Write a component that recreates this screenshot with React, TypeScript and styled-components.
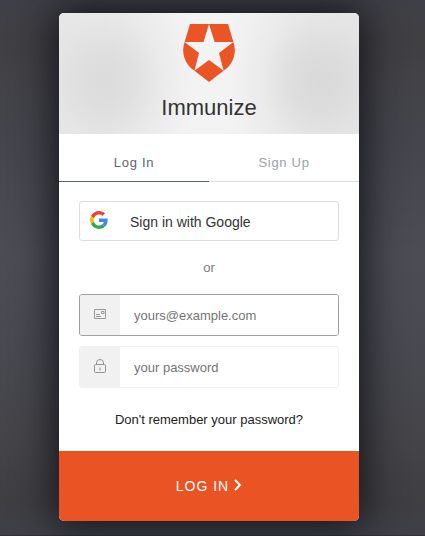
import React from "react";
import styled, { createGlobalStyle } from "styled-components";

const GlobalStyle = createGlobalStyle`
  *, *::before, *::after { box-sizing: border-box; }
  body {
    margin: 0;
    font-family: "Liberation Sans", Arial, sans-serif;
    overflow: hidden;
  }
  button, input { font-family: inherit; }
`;

const Page = styled.main`
  height: 100vh;
  padding-top: 13px;
  padding-left: 59px;
  border-bottom: 1px solid #372f38;
  background: linear-gradient(180deg, #3f3f49 0%, #404043 7%, #44444c 24%, #4c4c55 48%, #4a4a53 60%, #444449 82%, #3f3f42 94%, #3f3f49 100%);
`;

const Card = styled.form`
  display: flex;
  flex-direction: column;
  width: 300px;
  height: 508px;
  border-radius: 5px;
  overflow: hidden;
  background: #fff;
  box-shadow: 0 0 40px 4px #111118;
`;

const Header = styled.header`
  display: flex;
  flex-direction: column;
  align-items: center;
  height: 121px;
  padding-top: 11px;
  background:
    radial-gradient(ellipse 84px 100px at 50px 68px, rgba(208, 208, 208, 0.6) 0%, rgba(210, 210, 210, 0.5) 30%, rgba(218, 218, 218, 0.24) 65%, rgba(235, 235, 235, 0) 100%),
    radial-gradient(ellipse 84px 100px at 258px 68px, rgba(208, 208, 208, 0.65) 0%, rgba(210, 210, 210, 0.55) 30%, rgba(218, 218, 218, 0.24) 65%, rgba(235, 235, 235, 0) 100%),
    linear-gradient(90deg, #e8e8e8, #f3f3f3 45%, #f3f3f3 55%, #e6e6e6);
`;

const Title = styled.h1`
  margin: 13px 0 0;
  font-size: 22px;
  line-height: 25px;
  font-weight: 400;
  color: #333;
`;

const Tabs = styled.nav`
  display: flex;
  height: 48px;
`;

const Tab = styled.button<{ $active?: boolean }>`
  flex: 1;
  padding: 9px 0 0;
  border: 0;
  border-bottom: 1px solid ${(p) => (p.$active ? "#5c666f" : "#d9dcdd")};
  background: none;
  font-size: 13px;
  letter-spacing: 0.7px;
  color: ${(p) => (p.$active ? "#5c666f" : "#9ca3a8")};
`;

const Content = styled.section`
  display: flex;
  flex-direction: column;
  flex: 1;
  padding: 19px 20px 0;
`;

const GoogleButton = styled.button`
  display: flex;
  align-items: center;
  height: 40px;
  padding: 0 0 2px 10px;
  border: 1px solid #dedede;
  border-radius: 3px;
  background: #fff;
  font-size: 14px;
  color: #333;
  gap: 22px;

  span { padding-top: 3px; }
`;

const Separator = styled.p`
  margin: 19px 0 18px;
  font-size: 13px;
  line-height: 16px;
  text-align: center;
  color: #7c7c7c;
`;

const Field = styled.label<{ $focused?: boolean }>`
  display: flex;
  height: 42px;
  margin-bottom: 10px;
  border: 1px solid ${(p) => (p.$focused ? "#a0a0a0" : "#f1f1f1")};
  border-radius: 3px;
  overflow: hidden;
`;

const FieldIcon = styled.span`
  display: flex;
  align-items: center;
  justify-content: center;
  width: 40px;
  background: #f1f1f1;

  svg { margin-top: -2px; }
`;

const Input = styled.input`
  flex: 1;
  min-width: 0;
  padding: 1px 14px 0;
  border: 0;
  outline: 0;
  font-size: 13px;
  color: #555;

  &::placeholder { color: #757575; opacity: 1; }
`;

const ForgotLink = styled.a`
  margin-top: 13px;
  font-size: 13px;
  line-height: 17px;
  text-align: center;
  color: #222;
`;

const Submit = styled.button`
  display: flex;
  align-items: center;
  justify-content: center;
  gap: 5px;
  height: 70px;
  padding: 0;
  border: 0;
  background: #ea5323;
  color: #fff;
  font-size: 14px;
  letter-spacing: 1px;

  svg { margin-top: -2px; }
`;

const ShieldLogo = () => (
  <svg width="52" height="58" viewBox="0 0 52 58" fill="#eb5424" aria-hidden="true">
    <path d="M7 0H26L20.5 18H1.6Z" />
    <path d="M26 0H45L50.4 18H31.6Z" />
    <path d="M1.6 18L16 29L11.4 46.8C3 41 -2.5 31 1.6 18Z" />
    <path d="M50.4 18L36 29L40.6 46.8C49 41 54.5 31 50.4 18Z" />
    <path d="M26 36L40.6 46.8L26 58L11.4 46.8Z" />
  </svg>
);

const GoogleIcon = () => (
  <svg width="18" height="18" viewBox="0 0 48 48" aria-hidden="true">
    <path fill="#EA4335" d="M24 9.5c3.5 0 6.7 1.2 9.2 3.6l6.9-6.9C35.9 2.4 30.5 0 24 0 14.6 0 6.5 5.4 2.6 13.2l8 6.2C12.4 13.7 17.7 9.5 24 9.5z" />
    <path fill="#4285F4" d="M47 24.6c0-1.6-.2-3.1-.4-4.6H24v9h12.9c-.6 3-2.3 5.5-4.8 7.2l7.7 6C44.4 38 47 32 47 24.6z" />
    <path fill="#FBBC05" d="M10.5 28.6A14.5 14.5 0 0 1 9.8 24c0-1.6.3-3.1.8-4.6l-8-6.2A24 24 0 0 0 0 24c0 3.9.9 7.5 2.6 10.8z" />
    <path fill="#34A853" d="M24 48c6.5 0 11.9-2.1 15.9-5.8l-7.7-6c-2.2 1.5-4.9 2.3-8.2 2.3-6.3 0-11.6-4.2-13.5-9.9l-8 6.2C6.5 42.6 14.6 48 24 48z" />
  </svg>
);

const EnvelopeIcon = () => (
  <svg width="12" height="10" viewBox="0 0 12 10" fill="none" stroke="#999" aria-hidden="true">
    <path d="M.5 .5H11.5V9.5H.5ZM2 5.5H6M2 7.5H7M7.5 2.5H10V4.5H7.5Z" />
  </svg>
);

const LockIcon = () => (
  <svg width="12" height="14" viewBox="0 0 12 14" fill="none" stroke="#929292" aria-hidden="true">
    <rect x=".5" y="5.5" width="11" height="8" rx="1.2" />
    <path d="M2.5 5.5V4A3.5 3.5 0 0 1 9.5 4V5.5M6 8.5V11.5" />
  </svg>
);

const ChevronIcon = () => (
  <svg width="8" height="12" viewBox="0 0 8 12" fill="none" stroke="#fff" strokeWidth="2" aria-hidden="true">
    <path d="M1 1L6 6L1 11" />
  </svg>
);

export default function App() {
  return (
    <>
      <GlobalStyle />
      <Page>
        <Card>
          <Header>
            <ShieldLogo />
            <Title>Immunize</Title>
          </Header>
          <Tabs>
            <Tab type="button" $active>Log In</Tab>
            <Tab type="button">Sign Up</Tab>
          </Tabs>
          <Content>
            <GoogleButton type="button">
              <GoogleIcon />
              <span>Sign in with Google</span>
            </GoogleButton>
            <Separator>or</Separator>
            <Field $focused>
              <FieldIcon><EnvelopeIcon /></FieldIcon>
              <Input type="email" placeholder="yours@example.com" />
            </Field>
            <Field>
              <FieldIcon><LockIcon /></FieldIcon>
              <Input type="password" placeholder="your password" />
            </Field>
            <ForgotLink>Don't remember your password?</ForgotLink>
          </Content>
          <Submit type="button">
            LOG IN
            <ChevronIcon />
          </Submit>
        </Card>
      </Page>
    </>
  );
}
